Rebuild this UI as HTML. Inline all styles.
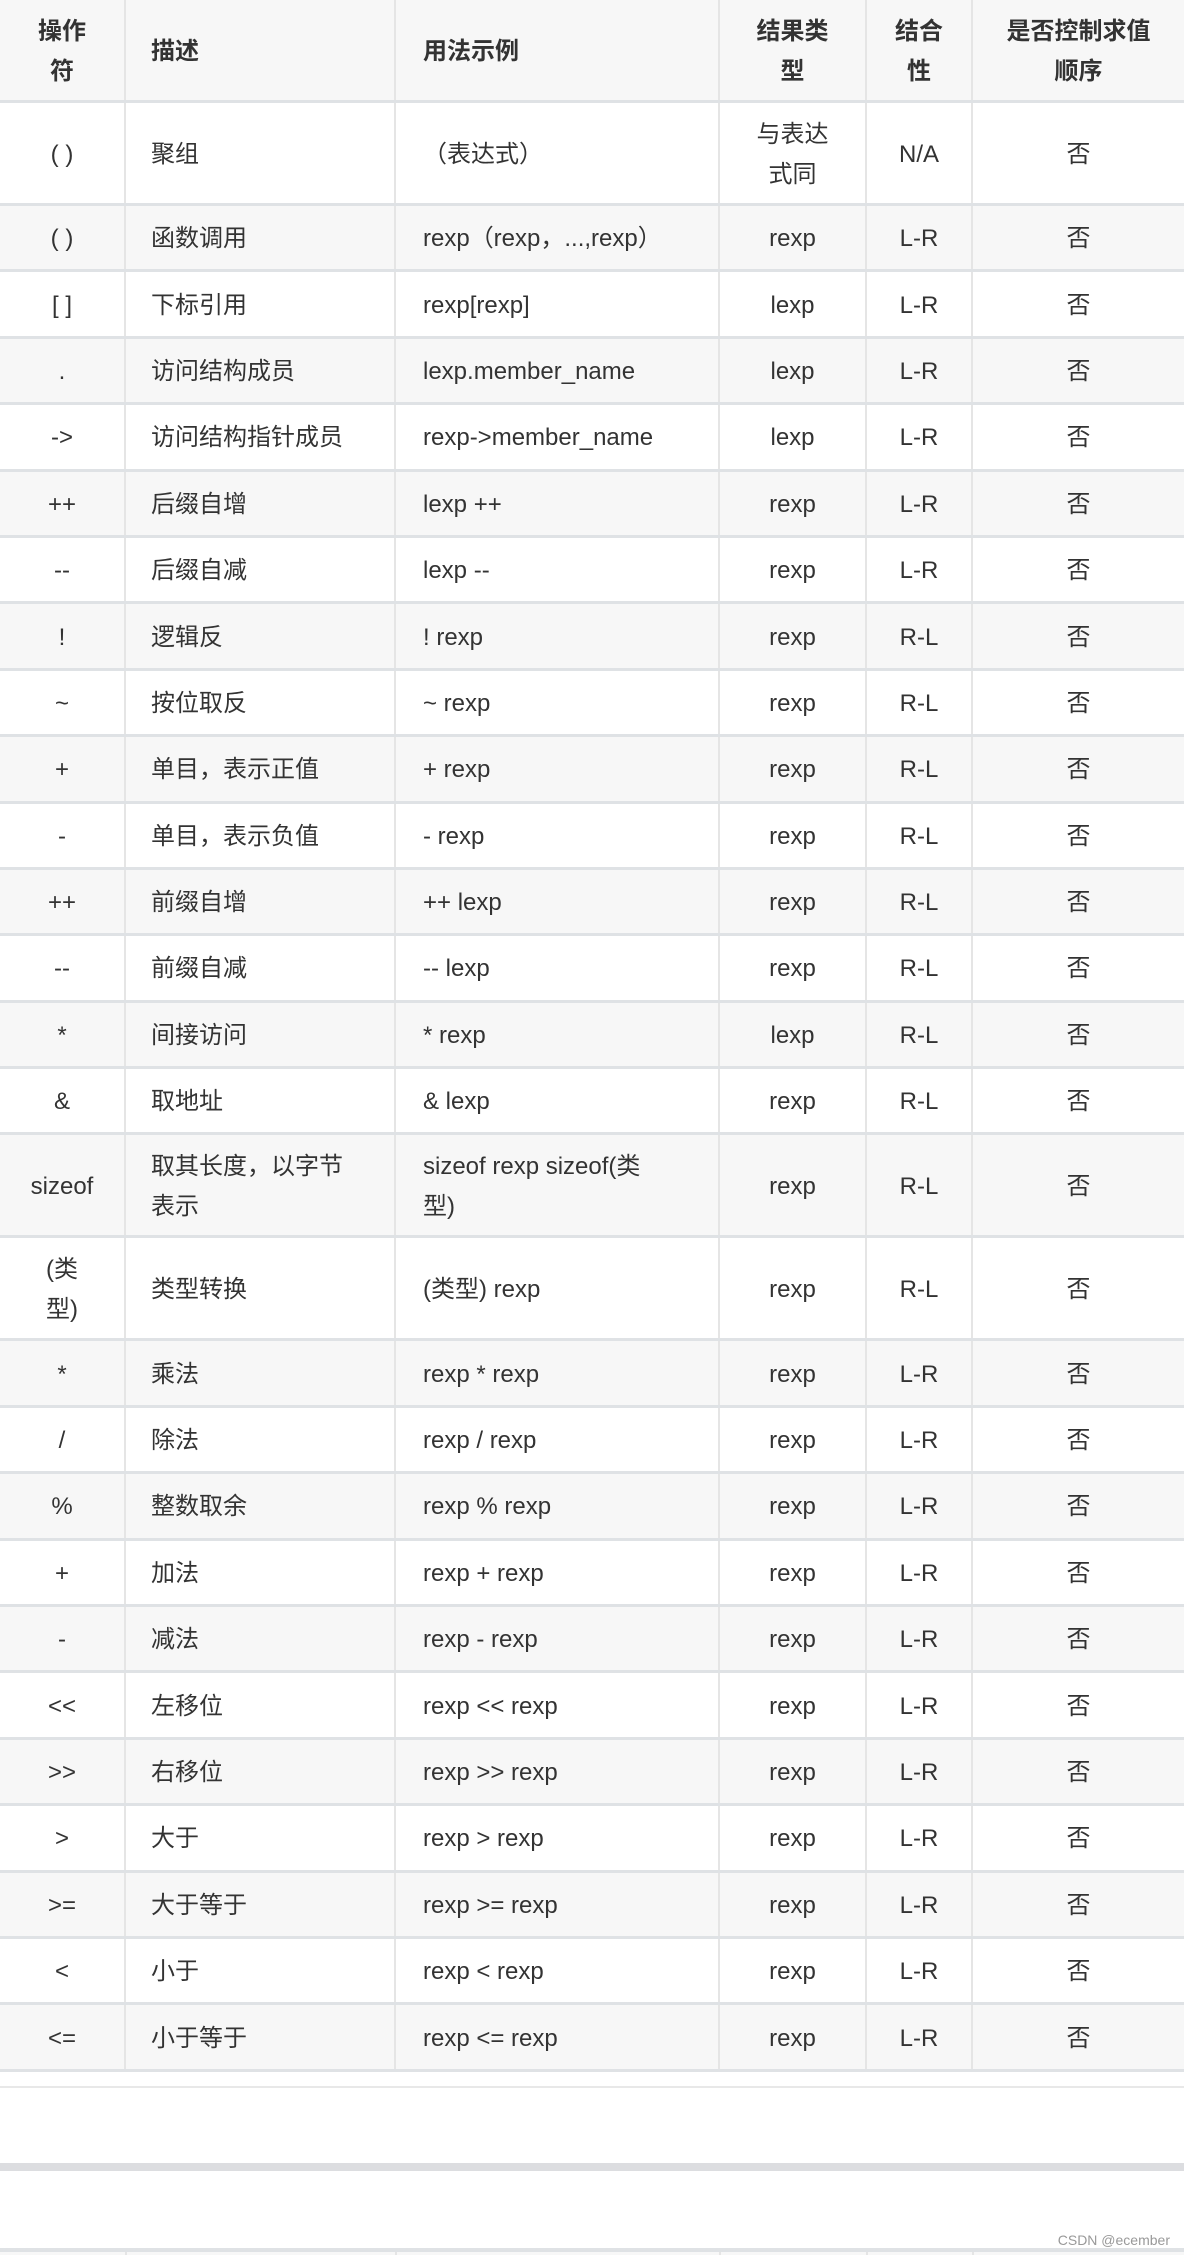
<!DOCTYPE html>
<html><head><meta charset="utf-8"><style>
*{margin:0;padding:0;box-sizing:border-box}
body{width:1184px;height:2255px;background:#fff;font-family:"Liberation Sans","Noto Sans CJK SC",sans-serif;font-size:24px;color:#333;position:relative;overflow:hidden}
.r{display:flex;border-bottom:3px solid #dfe2e5;background:#fff}
.r.g{background:#f7f7f7}
.r>div{display:flex;align-items:center;border-right:2px solid #e5e5e5;line-height:40px;padding:3px 10px 0}
.r>div:last-child{border-right:none}
.c1{width:126px;justify-content:center;text-align:center}
.c2{width:270px;padding-left:25px!important}
.c3{width:324px;padding-left:27px!important}
.c4{width:147px;justify-content:center;text-align:center}
.c5{width:106px;justify-content:center;text-align:center}
.c6{width:211px;justify-content:center;text-align:center}
.h{font-weight:bold}
.n{height:66.4px}
.t{height:103px}
</style></head><body>
<div class="r g t h"><div class="c1">操作<br>符</div><div class="c2">描述</div><div class="c3">用法示例</div><div class="c4">结果类<br>型</div><div class="c5">结合<br>性</div><div class="c6">是否控制求值<br>顺序</div></div>
<div class="r t"><div class="c1">( )</div><div class="c2">聚组</div><div class="c3">（表达式）</div><div class="c4">与表达<br>式同</div><div class="c5">N/A</div><div class="c6">否</div></div>
<div class="r g n"><div class="c1">( )</div><div class="c2">函数调用</div><div class="c3">rexp（rexp，...,rexp）</div><div class="c4">rexp</div><div class="c5">L-R</div><div class="c6">否</div></div>
<div class="r n"><div class="c1">[ ]</div><div class="c2">下标引用</div><div class="c3">rexp[rexp]</div><div class="c4">lexp</div><div class="c5">L-R</div><div class="c6">否</div></div>
<div class="r g n"><div class="c1">.</div><div class="c2">访问结构成员</div><div class="c3">lexp.member_name</div><div class="c4">lexp</div><div class="c5">L-R</div><div class="c6">否</div></div>
<div class="r n"><div class="c1">-&gt;</div><div class="c2">访问结构指针成员</div><div class="c3">rexp-&gt;member_name</div><div class="c4">lexp</div><div class="c5">L-R</div><div class="c6">否</div></div>
<div class="r g n"><div class="c1">++</div><div class="c2">后缀自增</div><div class="c3">lexp ++</div><div class="c4">rexp</div><div class="c5">L-R</div><div class="c6">否</div></div>
<div class="r n"><div class="c1">--</div><div class="c2">后缀自减</div><div class="c3">lexp --</div><div class="c4">rexp</div><div class="c5">L-R</div><div class="c6">否</div></div>
<div class="r g n"><div class="c1">!</div><div class="c2">逻辑反</div><div class="c3">! rexp</div><div class="c4">rexp</div><div class="c5">R-L</div><div class="c6">否</div></div>
<div class="r n"><div class="c1">~</div><div class="c2">按位取反</div><div class="c3">~ rexp</div><div class="c4">rexp</div><div class="c5">R-L</div><div class="c6">否</div></div>
<div class="r g n"><div class="c1">+</div><div class="c2">单目，表示正值</div><div class="c3">+ rexp</div><div class="c4">rexp</div><div class="c5">R-L</div><div class="c6">否</div></div>
<div class="r n"><div class="c1">-</div><div class="c2">单目，表示负值</div><div class="c3">- rexp</div><div class="c4">rexp</div><div class="c5">R-L</div><div class="c6">否</div></div>
<div class="r g n"><div class="c1">++</div><div class="c2">前缀自增</div><div class="c3">++ lexp</div><div class="c4">rexp</div><div class="c5">R-L</div><div class="c6">否</div></div>
<div class="r n"><div class="c1">--</div><div class="c2">前缀自减</div><div class="c3">-- lexp</div><div class="c4">rexp</div><div class="c5">R-L</div><div class="c6">否</div></div>
<div class="r g n"><div class="c1">*</div><div class="c2">间接访问</div><div class="c3">* rexp</div><div class="c4">lexp</div><div class="c5">R-L</div><div class="c6">否</div></div>
<div class="r n"><div class="c1">&amp;</div><div class="c2">取地址</div><div class="c3">&amp; lexp</div><div class="c4">rexp</div><div class="c5">R-L</div><div class="c6">否</div></div>
<div class="r g t"><div class="c1">sizeof</div><div class="c2">取其长度，以字节<br>表示</div><div class="c3">sizeof rexp sizeof(类<br>型)</div><div class="c4">rexp</div><div class="c5">R-L</div><div class="c6">否</div></div>
<div class="r t"><div class="c1">(类<br>型)</div><div class="c2">类型转换</div><div class="c3">(类型) rexp</div><div class="c4">rexp</div><div class="c5">R-L</div><div class="c6">否</div></div>
<div class="r g n"><div class="c1">*</div><div class="c2">乘法</div><div class="c3">rexp * rexp</div><div class="c4">rexp</div><div class="c5">L-R</div><div class="c6">否</div></div>
<div class="r n"><div class="c1">/</div><div class="c2">除法</div><div class="c3">rexp / rexp</div><div class="c4">rexp</div><div class="c5">L-R</div><div class="c6">否</div></div>
<div class="r g n"><div class="c1">%</div><div class="c2">整数取余</div><div class="c3">rexp % rexp</div><div class="c4">rexp</div><div class="c5">L-R</div><div class="c6">否</div></div>
<div class="r n"><div class="c1">+</div><div class="c2">加法</div><div class="c3">rexp + rexp</div><div class="c4">rexp</div><div class="c5">L-R</div><div class="c6">否</div></div>
<div class="r g n"><div class="c1">-</div><div class="c2">减法</div><div class="c3">rexp - rexp</div><div class="c4">rexp</div><div class="c5">L-R</div><div class="c6">否</div></div>
<div class="r n"><div class="c1">&lt;&lt;</div><div class="c2">左移位</div><div class="c3">rexp &lt;&lt; rexp</div><div class="c4">rexp</div><div class="c5">L-R</div><div class="c6">否</div></div>
<div class="r g n"><div class="c1">&gt;&gt;</div><div class="c2">右移位</div><div class="c3">rexp &gt;&gt; rexp</div><div class="c4">rexp</div><div class="c5">L-R</div><div class="c6">否</div></div>
<div class="r n"><div class="c1">&gt;</div><div class="c2">大于</div><div class="c3">rexp &gt; rexp</div><div class="c4">rexp</div><div class="c5">L-R</div><div class="c6">否</div></div>
<div class="r g n"><div class="c1">&gt;=</div><div class="c2">大于等于</div><div class="c3">rexp &gt;= rexp</div><div class="c4">rexp</div><div class="c5">L-R</div><div class="c6">否</div></div>
<div class="r n"><div class="c1">&lt;</div><div class="c2">小于</div><div class="c3">rexp &lt; rexp</div><div class="c4">rexp</div><div class="c5">L-R</div><div class="c6">否</div></div>
<div class="r g n"><div class="c1">&lt;=</div><div class="c2">小于等于</div><div class="c3">rexp &lt;= rexp</div><div class="c4">rexp</div><div class="c5">L-R</div><div class="c6">否</div></div>
<div style="position:absolute;left:0;top:2086px;width:1184px;height:2px;background:#e8e8e8"></div>
<div style="position:absolute;left:0;top:2163px;width:1184px;height:8px;background:#dcdde0"></div>
<div style="position:absolute;right:14px;top:2232px;font-size:14px;color:#999">CSDN @ecember</div>
<div style="position:absolute;left:0;top:2248px;width:1184px;height:4px;background:#dfe2e5"></div>
<div style="position:absolute;left:0;top:2252px;width:1184px;height:3px;background:#f7f7f7"></div>
<div style="position:absolute;left:125px;top:2252px;width:2px;height:3px;background:#e5e5e5"></div>
<div style="position:absolute;left:395px;top:2252px;width:2px;height:3px;background:#e5e5e5"></div>
<div style="position:absolute;left:719px;top:2252px;width:2px;height:3px;background:#e5e5e5"></div>
<div style="position:absolute;left:866px;top:2252px;width:2px;height:3px;background:#e5e5e5"></div>
<div style="position:absolute;left:972px;top:2252px;width:2px;height:3px;background:#e5e5e5"></div>
</body></html>
